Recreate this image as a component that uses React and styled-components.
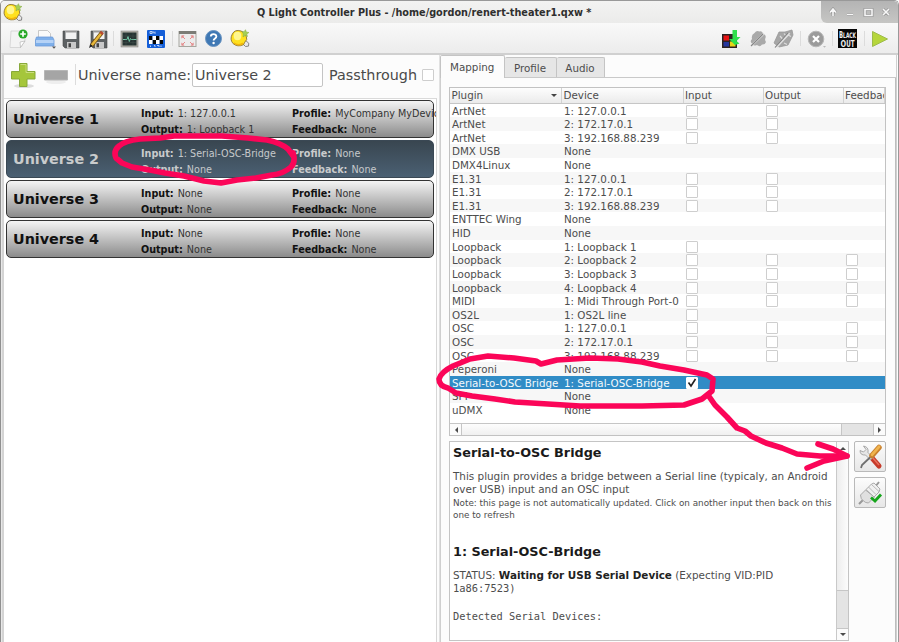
import React from 'react';
import styled, { createGlobalStyle } from 'styled-components';

const GlobalStyle = createGlobalStyle`
  * { box-sizing: border-box; }
  html, body { margin: 0; padding: 0; overflow: hidden; background: #fcfcfc; }
  body { font-family: "DejaVu Sans", sans-serif; font-size: 10.34px; color: #4d4d4d; }
`;

const Window = styled.div`
  position: relative;
  width: 899px;
  height: 642px;
  overflow: hidden;
  display: flex;
  flex-direction: column;
  background: #fcfcfc;
  border-top: 1px solid #999;
  border-left: 1px solid #8f8f8f;
  border-right: 1px solid #999;
  border-radius: 5px 5px 0 0;
`;

const TitleBar = styled.header`
  height: 22px;
  flex: none;
  display: flex;
  align-items: center;
  background: linear-gradient(#f3f3f2, #ebebea);
`;
const AppIcon = styled.div`
  width: 24px;
  height: 22px;
  padding: 1px 0 0 2px;
`;
const Title = styled.h1`
  flex: 1;
  margin: 0;
  padding: 1px 0 0 232px;
  font-size: 9.7px;
  line-height: 20px;
  font-weight: 700;
  color: #2f2f2f;
  white-space: nowrap;
`;
const WindowButtons = styled.div`
  width: 77px;
  height: 22px;
  background: linear-gradient(#b4b4b4, #c6c6c4);
  border-radius: 0 4px 0 6px;
`;

const ToolBar = styled.nav`
  height: 30px;
  flex: none;
  display: flex;
  align-items: center;
  padding: 1px 8px 0 8px;
  background: linear-gradient(#f9f9f9, #ececec);
  svg { display: block; flex: none; }
`;
const Tool = styled.div`
  width: ${(p) => p.$w || 27}px;
  height: 22px;
  display: flex;
  align-items: center;
  flex: none;
`;
const Spacer = styled.div`flex: 1;`;
const Separator = styled.div`
  width: 1px;
  height: ${(p) => p.$h || 15}px;
  background: #dcdcdc;
  margin-right: ${(p) => p.$after}px;
  flex: none;
`;

const Body = styled.main`
  flex: 1;
  min-height: 0;
  display: flex;
  border-top: 2px solid #d0d0d0;
  border-left: 1px solid #e8e8e8;
`;
const LeftPane = styled.section`
  width: 438px;
  flex: none;
  display: flex;
  flex-direction: column;
  border-left: 2px solid #d4d4d4;
  border-right: 1px solid #e1e1e1;
`;
const UniverseBar = styled.div`
  height: 43px;
  display: flex;
  align-items: center;
  flex: none;
  padding-left: 6px;
  padding-bottom: 4px;
  font-size: 14.33px;
  color: #4a4a4a;
  white-space: nowrap;
`;
const BarIcon = styled.div`
  width: ${(p) => p.$w}px;
  height: 26px;
  flex: none;
`;
const NameInput = styled.div`
  width: 131px;
  height: 24px;
  border: 1px solid #c4c4c4;
  border-radius: 2px;
  background: #fff;
  padding-left: 2px;
  line-height: 22px;
  margin: 0 6px 0 1px;
  flex: none;
`;
const BarLabel = styled.span`
  line-height: 20px;
  display: block;
  width: ${(p) => p.$w}px;
  flex: none;
`;
const UniverseList = styled.div`
  flex: 1;
  width: 433px;
  padding: 1px 1px 0 2px;
  border-top: 1px solid #dadada;
  border-right: 1px solid #d6d6d6;
  background: #fff;
  display: flex;
  flex-direction: column;
  gap: 2px;
`;
const UniverseCard = styled.article`
  width: 427.5px;
  height: 38px;
  flex: none;
  display: grid;
  grid-template-columns: 128px 151px 143px;
  align-items: center;
  padding-left: 6px;
  border: ${(p) => (p.$active ? '1px solid #3a4854' : '1.4px solid #333')};
  border-radius: 5px;
  background: ${(p) => (p.$active ? 'linear-gradient(#394650, #4b6073)' : 'linear-gradient(#f4f4f4, #8b8b8b)')};
  color: ${(p) => (p.$active ? '#c6c9cb' : '#333')};
  --strong: ${(p) => (p.$active ? '#c9cbcc' : '#111')};
`;
const CardName = styled.h2`
  margin: 0;
  font-size: 14.33px;
  color: var(--strong);
`;
const CardFacts = styled.div`
  font-family: "DejaVu Sans Condensed", "DejaVu Sans", sans-serif;
  font-stretch: condensed;
  font-size: 10.7px;
  line-height: 16px;
  padding-top: 6px;
  white-space: nowrap;
  width: 144px;
  overflow: hidden;
  b { color: var(--strong); margin-right: 1px; }
`;

const RightPane = styled.section`
  flex: 1;
  min-width: 0;
  display: flex;
  flex-direction: column;
  border-right: 1px solid #d0d0d0;
  margin-right: 1px;
`;
const Tabs = styled.div`
  height: 23px;
  display: flex;
  align-items: flex-end;
  flex: none;
  border-bottom: 1px solid #c9c9c9;
  padding-top: 1px;
`;
const Tab = styled.div`
  width: ${(p) => p.$w}px;
  height: ${(p) => (p.$active ? 23 : 20)}px;
  margin-bottom: ${(p) => (p.$active ? -1 : 0)}px;
  border: 1px solid #c4c4c4;
  border-bottom: 0;
  border-left-width: ${(p) => (p.$active ? 1 : 0)}px;
  border-radius: 2px 2px 0 0;
  background: ${(p) => (p.$active ? '#fcfcfc' : '#e6e6e6')};
  display: flex;
  align-items: center;
  justify-content: center;
`;
const TabPane = styled.div`
  flex: 1;
  min-height: 0;
  padding: 9px 8px 0 8px;
  border-left: 1px solid #cfcfcf;
  border-right: 1px solid #bdbdbd;
  display: flex;
  flex-direction: column;
`;
const Table = styled.div`
  width: 437px;
  height: 349px;
  flex: none;
  border: 1px solid #c2c2c2;
  overflow: hidden;
  background: #fff;
  display: flex;
  flex-direction: column;
`;
const columns = '112px 121.5px 80px 80px 41.5px';
const HeaderRow = styled.div`
  display: grid;
  grid-template-columns: ${columns};
  height: 15.6px;
  flex: none;
  background: linear-gradient(#fdfdfd, #ebebeb);
  border-bottom: 1px solid #c6c6c6;
`;
const HeaderCell = styled.div`
  border-right: 1px solid #d2d2d2;
  padding-left: 1.5px;
  line-height: 15px;
  white-space: nowrap;
  overflow: hidden;
  display: flex;
  justify-content: space-between;
`;
const SortMark = styled.i`
  border: 3px solid transparent;
  border-top-color: #444;
  border-bottom: 0;
  margin: 6px 4px 0 0;
  height: 3px;
`;
const DataRow = styled.div`
  display: grid;
  grid-template-columns: ${columns};
  height: 13.62px;
  flex: none;
  line-height: 14px;
  background: ${(p) => (p.$selected ? '#308cc6' : p.$odd ? '#f7f7f7' : '#fff')};
  color: ${(p) => (p.$selected ? '#f4f9fc' : '#4d4d4d')};
`;
const DataCell = styled.div`
  padding-left: 2px;
  white-space: nowrap;
  height: 13px;
`;
const Check = styled.span`
  display: block;
  width: 12px;
  height: 12px;
  border: 1px solid ${(p) => (p.$checked ? '#fff' : '#cecece')};
  border-radius: 1px;
  background: #fff;
  margin-top: 1px;
  svg { display: block; }
`;
const HScroll = styled.div`
  height: 12px;
  margin-top: auto;
  display: flex;
  flex: none;
  border-top: 1px solid #c6c6c6;
  background: linear-gradient(#ececec, #fafafa);
`;
const ScrollButton = styled.div`
  width: 11px;
  height: 11px;
  flex: none;
  display: flex;
  align-items: center;
  justify-content: center;
  background: #fbfbfb;
`;
const HThumb = styled.div`
  width: 381px;
  background: linear-gradient(#fdfdfd, #f0f0f0);
  border: solid #c6c6c6;
  border-width: 0 1px;
`;
const HTrack = styled.div`
  flex: 1;
  background: #e4e4e4;
  border-right: 1px solid #c6c6c6;
`;

const Lower = styled.div`
  display: flex;
  margin-top: 5px;
  gap: 5px;
`;
const InfoBox = styled.div`
  width: 400px;
  height: 200px;
  border: 1px solid #c4c4c4;
  background: #fff;
  display: flex;
  flex: none;
`;
const InfoText = styled.div`
  flex: 1;
  padding: 0 0 0 3px;
  white-space: nowrap;
  color: #4d4d4d;
`;
const InfoHeading = styled.h3`
  margin: 0;
  font-size: 12.8px;
  line-height: 16px;
  color: #1a1a1a;
  padding-top: ${(p) => p.$top}px;
`;
const InfoPara = styled.p`
  margin: ${(p) => p.$top}px 0 0;
  font-size: 10.4px;
  line-height: 13.4px;
  b { color: #222; }
`;
const InfoNote = styled.p`
  margin: 0;
  font-size: 8.8px;
  line-height: 12.6px;
`;
const InfoMono = styled.p`
  margin: 14px 0 0;
  font-family: "DejaVu Sans Mono", monospace;
  font-size: 10.34px;
  line-height: 13.4px;
`;
const MonoRun = styled.span`font-family: "DejaVu Sans Mono", monospace;`;
const VScroll = styled.div`
  width: 12px;
  border-left: 1px solid #c9c9c9;
  display: flex;
  flex-direction: column;
  background: linear-gradient(90deg, #ececec, #fafafa);
`;
const VThumb = styled.div`
  height: 138px;
  border: solid #c6c6c6;
  border-width: 0 0 1px;
  background: linear-gradient(90deg, #ededed, #fcfcfc);
`;
const VTrack = styled.div`
  flex: 1;
  background: #e4e4e4;
  border-bottom: 1px solid #c6c6c6;
`;
const SideButtons = styled.div`
  display: flex;
  flex-direction: column;
  gap: 5px;
`;
const SideButton = styled.div`
  width: 32px;
  height: 31px;
  border: 1px solid #b9b9b9;
  border-radius: 2px;
  background: linear-gradient(#fcfcfc, #e7e7e7);
  display: flex;
  align-items: center;
  justify-content: center;
`;
const Markup = styled.svg`
  position: absolute;
  left: -1px;
  top: -1px;
  pointer-events: none;
`;

const QlcIcon = () => (
  <svg width="21" height="21" viewBox="0 0 21 21">
    <path d="M12 15l3.500 3.500 3-.4.300-2.800-3.300-3z" fill="#e9e9e9" stroke="#777" strokeWidth=".9" />
    <path d="M11 3Q5 1 2.300 6-.5 11.500 3 15.500q4.500 4 10.500 1.200 1-2.500 3.200-5.200 0-6-5.700-8.500z" fill="#ffe11f" stroke="#8d7430" strokeWidth=".9" />
    <ellipse cx="7.500" cy="8" rx="3.800" ry="4.200" fill="#fff68e" />
    <path d="M4 15q5 3.500 9 .1" fill="none" stroke="#f3b50c" strokeWidth="1.500" />
    <path d="M12 3.500l2 .2 1.500-2 .8 2.300 2.700.5-2.200 1.500.7 2.500-2.400-1L13 9l.3-3z" fill="#a5cf55" stroke="#86ab45" strokeWidth=".5" />
  </svg>
);
const NewIcon = () => (
  <svg width="20" height="22" viewBox="0 0 20 22">
    <path d="M2 3h14v10l-4.500 6.500H1z" fill="#f3f3f3" stroke="#d0d0d0" strokeWidth=".8" />
    <path d="M16 13l-5 1 .5 5.500z" fill="#fff" stroke="#aaa" strokeWidth=".6" />
    <circle cx="14" cy="6" r="4.600" fill="#28a828" />
    <path d="M14 3.200v5.600M11.200 6h5.600" stroke="#fff" strokeWidth="1.700" />
  </svg>
);
const OpenIcon = () => (
  <svg width="21" height="22" viewBox="0 0 21 22">
    <path d="M3.500 11V2.500h9l3 3V11z" fill="#fafafa" stroke="#bbb" strokeWidth=".8" />
    <path d="M1.500 9h16l1.500 3v6H.5v-6z" fill="#7fb0ea" stroke="#6c9bd9" strokeWidth=".8" />
    <path d="M1 12h17.500v3H1z" fill="#b5d2f6" />
    <path d="M17 18.500h4l-2 2.200z" fill="#555" />
  </svg>
);
const Disk = () => (
  <>
    <path d="M1 2h16v17H3l-2-2z" fill="#5d6163" stroke="#4a4a4a" strokeWidth=".6" />
    <path d="M3.500 2h11v8h-11z" fill="#f2f2f2" />
    <path d="M3.500 2h11v1.500h-11z" fill="#999" />
    <path d="M5 13h9v6H5z" fill="#c9c9c9" />
    <path d="M6.500 14.200h2.500v4H6.500z" fill="#444" />
  </>
);
const SaveIcon = () => (
  <svg width="18" height="20" viewBox="0 0 18 20"><Disk /></svg>
);
const SaveAsIcon = () => (
  <svg width="21" height="20" viewBox="0 0 21 20">
    <g transform="translate(2 0)"><Disk /></g>
    <path d="M3.500 16.500 14 3.500" stroke="#6b4b10" strokeWidth="4" />
    <path d="M3.500 16.500 14 3.500" stroke="#e9b93c" strokeWidth="2.500" />
    <path d="m12.800 5 1.700-2" stroke="#b84b32" strokeWidth="3.500" />
    <path d="M1 19l1.200-4 2.700 2z" fill="#222" />
  </svg>
);
const MonitorIcon = () => (
  <svg width="19" height="20" viewBox="0 0 19 20">
    <rect x="1" y="2" width="17" height="16" fill="#b5b3aa" stroke="#888" strokeWidth=".6" />
    <rect x="2.500" y="3.500" width="14" height="13" fill="#263433" />
    <path d="M3 10.500h4l1-3 1.300 5 1.200-3 1 1h5" fill="none" stroke="#72c6a5" />
    <path d="M3 7h13M3 13.500h13M6 4v12M13 4v12" stroke="#465653" strokeWidth=".4" />
  </svg>
);
const DipIcon = () => (
  <svg width="20" height="20" viewBox="0 0 20 20">
    <rect x="1" y="1" width="18" height="18" rx="1" fill="#155fd8" />
    <path d="M3 7h3.500v4H3zM6.500 11H10v4H6.500zM10 7h3.500v4H10zM13.500 11H17v4h-3.500z" fill="#050505" />
    <path d="M3 11h3.500v4H3zM6.500 7H10v4H6.500zM10 11h3.500v4H10zM13.500 7H17v4h-3.500z" fill="#fff" />
    <path d="M4 4.500V2.500h2v2zM7 4.500v-2l2 2v-2M4.500 16.500v1.500M8 16.500h1v1.500M11 16.500h2v1.500M15 16.500v1.500" fill="none" stroke="#dfe9fa" strokeWidth=".8" />
  </svg>
);
const FullIcon = () => (
  <svg width="19" height="18" viewBox="0 0 19 18">
    <rect x="1" y="1.500" width="17" height="15" fill="#ececec" stroke="#a6a69f" />
    <path d="M1 1h17v3H1z" fill="#7c7c76" />
    <path d="M3.500 5.500h3l-3 3zM15.500 5.500h-3l3 3zM3.500 15.500h3l-3-3zM15.500 15.500h-3l3-3z" fill="#e06a6a" />
    <path d="m4 6 3 3M15 6l-3 3M4 15l3-3M15 15l-3-3" stroke="#e58a8a" />
  </svg>
);
const HelpIcon = () => (
  <svg width="19" height="20" viewBox="0 0 19 20">
    <circle cx="9.500" cy="9.500" r="8" fill="#3f78b4" stroke="#6b95c2" />
    <path d="M6.800 7.500c0-3.200 5.600-3.200 5.600 0 0 2-2.800 2-2.800 4" fill="none" stroke="#fff" strokeWidth="1.800" />
    <circle cx="9.600" cy="14" r="1.200" fill="#fff" />
  </svg>
);
const InputIcon = () => (
  <svg width="21" height="20" viewBox="0 0 21 20">
    <rect x="1" y="5" width="15" height="14" fill="#2c2222" />
    <path d="M2.500 6.500h5.500v5H2.500z" fill="#e81414" />
    <path d="M9 12.500h5.500v5H9z" fill="#e7d517" />
    <path d="M2.500 13h5.500v4.500H2.500z" fill="#26369d" />
    <path d="M11.500 1h4.500v7h3.500l-4 4 3 2.500-4.500 1.500-6-6h3.500z" fill="#2de04b" />
  </svg>
);
const CloudIcon = () => (
  <svg width="21" height="20" viewBox="0 0 21 20">
    <path d="M5.500 4q2-3 5-1.500 3-1 3.500 2.500 3.500.5 2.500 4-1 2 .5 4-1 3-4 2.500-2 3-5 .5-4 1.500-5-1.500-2.500-2 0-4.500-1-4 2.500-6z" fill="#a9a9a9" />
    <path d="M3 16 15 4.500" stroke="#dedede" strokeWidth="2" />
    <path d="M2 17 14 5" stroke="#858585" strokeWidth="1.100" />
  </svg>
);
const FadersIcon = () => (
  <svg width="21" height="20" viewBox="0 0 21 20">
    <path d="M6 3h6l7-2 1 5-5 10-9 2-5-4z" fill="#a6a6a6" stroke="#999" strokeWidth=".8" />
    <path d="m7 7 2.500 3M11 4.500l2 2.500M15 6l3 1.500M11 14l3 1.500" stroke="#ddd" strokeWidth="1.200" />
    <path d="M3.500 18 16.500 4" stroke="#e0e0e0" strokeWidth="2.200" />
    <path d="M2 18.500 15.500 3.500" stroke="#7d7d7d" strokeWidth="1.100" />
  </svg>
);
const StopIcon = () => (
  <svg width="20" height="20" viewBox="0 0 20 20">
    <circle cx="9" cy="10" r="7.800" fill="#9b9b9b" stroke="#b8b8b8" />
    <path d="m6 7 6 6m0-6-6 6" stroke="#fff" strokeWidth="2.200" />
    <path d="M16 17h3l-1.500 1.800z" fill="#b9b9b9" />
  </svg>
);
const BlackoutIcon = () => (
  <svg width="19" height="19" viewBox="0 0 19 19" fontFamily='"DejaVu Sans", sans-serif' fontWeight="700" fill="#ededed">
    <rect width="19" height="19" fill="#050505" />
    <text x="1" y="8.500" fontSize="9" textLength="17" lengthAdjust="spacingAndGlyphs">B<tspan fontSize="7.500">LACK</tspan></text>
    <text x="2.500" y="17.500" fontSize="9.500" textLength="14" lengthAdjust="spacingAndGlyphs">O<tspan fontSize="8">UT</tspan></text>
  </svg>
);
const PlayIcon = () => (
  <svg width="18" height="18" viewBox="0 0 18 18">
    <path d="M1.500 1.500 16.500 9l-15 7.500z" fill="#b6d63b" stroke="#9dbb4b" />
  </svg>
);
const PlusIcon = () => (
  <svg width="27" height="27" viewBox="0 0 27 27">
    <ellipse cx="14" cy="24" rx="10" ry="2" fill="#ddd" />
    <path d="M9.500 1.500h7.500v8h8v7.500h-8v7.500H9.500V17h-8V9.500h8z" fill="#a5c63b" stroke="#88a93b" />
    <path d="M10.500 2.500h5.500v8h8" fill="none" stroke="#c9dd7b" />
  </svg>
);
const MinusIcon = () => (
  <svg width="26" height="27" viewBox="0 0 26 27">
    <ellipse cx="13" cy="20" rx="10" ry="2" fill="#eee" />
    <path d="M1.500 8.500h23v9.500h-23z" fill="#a5a5a5" stroke="#b6b6b6" />
  </svg>
);
const WindowGlyphs = () => (
  <svg width="77" height="22" viewBox="0 0 77 22">
    <g fill="none" stroke="#989898" strokeWidth="3">
      <path d="M12 15V9m-3 2.500L12 8l3 3.500M26 13.500h6M44 8.500h7v6h-7zM62 8l6 6m0-6-6 6" />
    </g>
    <g fill="none" stroke="#f7f7f7" strokeWidth="1.600">
      <path d="M12 15V9m-3 2.500L12 8l3 3.500M26 13.500h6M44 8.500h7v6h-7zM62 8l6 6m0-6-6 6" />
    </g>
  </svg>
);
const Arrow = ({ dir }) => {
  const d = { left: 'M6 1 3 4l3 3z', right: 'm2 1 3 3-3 3z', up: 'M1 6l3-3 3 3z', down: 'm1 2 3 3 3-3z' }[dir];
  return <svg width="8" height="8" viewBox="0 0 8 8"><path d={d} fill="#4b4b4b" /></svg>;
};
const ToolsIcon = () => (
  <svg width="28" height="28" viewBox="0 0 28 28">
    <path d="m16 15 7 8" stroke="#c63a2a" strokeWidth="5" strokeLinecap="round" />
    <path d="m16 14 7 8" stroke="#e8705c" strokeWidth="1.500" />
    <path d="M7.500 3 10 6.500 7.500 9 4 7.500q0 5 5.500 4.500l5 5 2.500-2.500-5-5Q13 4 7.500 3z" fill="#e6e6e6" stroke="#8d8d8d" strokeWidth=".7" />
    <path d="m5 25 1-3 8.500-8" fill="none" stroke="#6f6f6f" strokeWidth="1.800" />
    <path d="m16 12.500 7-8" stroke="#c9822f" strokeWidth="5.500" strokeLinecap="round" />
    <path d="m16 11.800 7-8" stroke="#f0b44e" strokeWidth="2.800" strokeLinecap="round" />
  </svg>
);
const PlugIcon = () => (
  <svg width="28" height="28" viewBox="0 0 28 28">
    <path d="m3 25 4-4M19 8l4-5" stroke="#999" strokeWidth="2" />
    <path d="m4.500 16 5-5 9 7-6 6q-3 0-5-2-3-2-3-6z" fill="#e0e0e0" stroke="#999" strokeWidth=".8" />
    <path d="M10 10.500 15.500 5 18 4l6 6-1 3-5 5z" fill="#f0f0f0" stroke="#999" strokeWidth=".8" />
    <path d="m12.500 8 7.500 7.500M15.500 5.500l7.500 7" stroke="#aaa" strokeWidth=".8" />
    <path d="m15 18.500 4 3.500 6-6.500" fill="none" stroke="#16a51c" strokeWidth="2.800" />
  </svg>
);

const universes = [
  { name: 'Universe 1', input: '1: 127.0.0.1', output: '1: Loopback 1', profile: 'MyCompany MyDevice' },
  { name: 'Universe 2', input: '1: Serial-OSC-Bridge', output: 'None', profile: 'None', active: true },
  { name: 'Universe 3', input: 'None', output: 'None', profile: 'None' },
  { name: 'Universe 4', input: 'None', output: 'None', profile: 'None' },
];

// [plugin, device, number of checkable columns]
const devices = [
  ['ArtNet', '1: 127.0.0.1', 2],
  ['ArtNet', '2: 172.17.0.1', 2],
  ['ArtNet', '3: 192.168.88.239', 2],
  ['DMX USB', 'None', 0],
  ['DMX4Linux', 'None', 0],
  ['E1.31', '1: 127.0.0.1', 2],
  ['E1.31', '2: 172.17.0.1', 2],
  ['E1.31', '3: 192.168.88.239', 2],
  ['ENTTEC Wing', 'None', 0],
  ['HID', 'None', 0],
  ['Loopback', '1: Loopback 1', 1],
  ['Loopback', '2: Loopback 2', 3],
  ['Loopback', '3: Loopback 3', 3],
  ['Loopback', '4: Loopback 4', 3],
  ['MIDI', '1: Midi Through Port-0', 3],
  ['OS2L', '1: OS2L line', 1],
  ['OSC', '1: 127.0.0.1', 3],
  ['OSC', '2: 172.17.0.1', 3],
  ['OSC', '3: 192.168.88.239', 3],
  ['Peperoni', 'None', 0],
  ['Serial-to-OSC Bridge', '1: Serial-OSC-Bridge', 1],
  ['SPI', 'None', 0],
  ['uDMX', 'None', 0],
];

const Universe = ({ name, input, output, profile, active }) => (
  <UniverseCard $active={active}>
    <CardName>{name}</CardName>
    <CardFacts>
      <b>Input:</b> {input}<br /><b>Output:</b> {output}
    </CardFacts>
    <CardFacts>
      <b>Profile:</b> {profile}<br /><b>Feedback:</b> None
    </CardFacts>
  </UniverseCard>
);

const Device = ({ row, index }) => {
  const [plugin, device, checks] = row;
  const selected = index === 20;
  return (
    <DataRow $odd={index % 2 === 1} $selected={selected}>
      <DataCell>{plugin}</DataCell>
      <DataCell>{device}</DataCell>
      {[0, 1, 2].map((c) => (
        <DataCell key={c}>
          {c < checks && (
            <Check $checked={selected}>
              {selected && (
                <svg width="10" height="10" viewBox="0 0 10 10">
                  <path d="M1.500 4.500 4 8 8.500 1" fill="none" stroke="#222" strokeWidth="1.600" />
                </svg>
              )}
            </Check>
          )}
        </DataCell>
      ))}
    </DataRow>
  );
};

export default function App() {
  return (
    <>
      <GlobalStyle />
      <Window>
        <TitleBar>
          <AppIcon><QlcIcon /></AppIcon>
          <Title>Q Light Controller Plus - /home/gordon/renert-theater1.qxw *</Title>
          <WindowButtons><WindowGlyphs /></WindowButtons>
        </TitleBar>
        <ToolBar>
          <Tool $w={26}><NewIcon /></Tool>
          <Tool><OpenIcon /></Tool>
          <Tool $w={26}><SaveIcon /></Tool>
          <Tool $w={25}><SaveAsIcon /></Tool>
          <Separator $after={6} />
          <Tool $w={26}><MonitorIcon /></Tool>
          <Tool $w={26}><DipIcon /></Tool>
          <Separator $after={5} />
          <Tool $w={26}><FullIcon /></Tool>
          <Tool $w={26}><HelpIcon /></Tool>
          <Tool><QlcIcon /></Tool>
          <Spacer />
          <Tool $w={28}><InputIcon /></Tool>
          <Tool $w={24}><CloudIcon /></Tool>
          <Tool $w={27}><FadersIcon /></Tool>
          <Separator $after={6} />
          <Tool $w={25}><StopIcon /></Tool>
          <Separator $after={5} />
          <Tool $w={26}><BlackoutIcon /></Tool>
          <Separator $after={6} />
          <Tool $w={19}><PlayIcon /></Tool>
        </ToolBar>
        <Body>
          <LeftPane>
            <UniverseBar>
              <BarIcon $w={33}><PlusIcon /></BarIcon>
              <BarIcon $w={32}><MinusIcon /></BarIcon>
              <Separator $h={21} $after={2} />
              <BarLabel $w={113}>Universe name:</BarLabel>
              <NameInput>Universe 2</NameInput>
              <BarLabel $w={93}>Passthrough</BarLabel>
              <Check />
            </UniverseBar>
            <UniverseList>
              {universes.map((u) => <Universe key={u.name} {...u} />)}
            </UniverseList>
          </LeftPane>
          <RightPane>
            <Tabs>
              <Tab $w={64.5} $active>Mapping</Tab>
              <Tab $w={52}>Profile</Tab>
              <Tab $w={48}>Audio</Tab>
            </Tabs>
            <TabPane>
              <Table>
                <HeaderRow>
                  <HeaderCell>Plugin<SortMark /></HeaderCell>
                  <HeaderCell>Device</HeaderCell>
                  <HeaderCell>Input</HeaderCell>
                  <HeaderCell>Output</HeaderCell>
                  <HeaderCell>Feedback</HeaderCell>
                </HeaderRow>
                {devices.map((row, i) => <Device key={i} row={row} index={i} />)}
                <HScroll>
                  <ScrollButton><Arrow dir="left" /></ScrollButton>
                  <HThumb />
                  <HTrack />
                  <ScrollButton><Arrow dir="right" /></ScrollButton>
                </HScroll>
              </Table>
              <Lower>
                <InfoBox>
                  <InfoText>
                    <InfoHeading $top={3}>Serial-to-OSC Bridge</InfoHeading>
                    <InfoPara $top={9}>
                      This plugin provides a bridge between a Serial line (typicaly, an Android<br />
                      over USB) input and an OSC input
                    </InfoPara>
                    <InfoNote>
                      Note: this page is not automatically updated. Click on another input then back on this<br />
                      one to refresh
                    </InfoNote>
                    <InfoHeading $top={21.5}>1: Serial-OSC-Bridge</InfoHeading>
                    <InfoPara $top={9.5}>
                      STATUS: <b>Waiting for USB Serial Device</b> (Expecting VID:PID<br />
                      <MonoRun>1a86:7523)</MonoRun>
                    </InfoPara>
                    <InfoMono>Detected Serial Devices:</InfoMono>
                  </InfoText>
                  <VScroll>
                    <ScrollButton><Arrow dir="up" /></ScrollButton>
                    <VThumb />
                    <VTrack />
                    <ScrollButton><Arrow dir="down" /></ScrollButton>
                  </VScroll>
                </InfoBox>
                <SideButtons>
                  <SideButton><ToolsIcon /></SideButton>
                  <SideButton><PlugIcon /></SideButton>
                </SideButtons>
              </Lower>
            </TabPane>
          </RightPane>
        </Body>
        <Markup width="899" height="642" viewBox="0 0 899 642">
          <g fill="none" stroke="#fb0558" strokeWidth="5.600" strokeLinecap="round" strokeLinejoin="round">
            <path d="M294 157L288 149Q281 143 267 140L248 138L222 136L174 136L160 138L140 139Q124 141 119 146Q113 151 116 158L122 163L132 167L150 170L165 173L184 176L204 181L221 183L237 180L256 178L272 175Q283 174 291 167Q296 162 293 153" />
            <path d="M684 370L660 366L642 362L618 359L590 358L557 360L541 364L536 361L514 358L488 356L470 359L453 366Q441 372 439 379Q439 386 448 388L456 393L472 396L495 399L515 402L548 404L580 406L642 406L684 405L702 399L712 391L713 379L707 375L684 370" />
            <path d="M708 395L715 405L727 417L737 428L745 431L751 436L766 443L782 448L797 454L820 456L847 456" />
            <path d="M818 444L833 449L847 456L824 461L807 468" />
          </g>
        </Markup>
      </Window>
    </>
  );
}
